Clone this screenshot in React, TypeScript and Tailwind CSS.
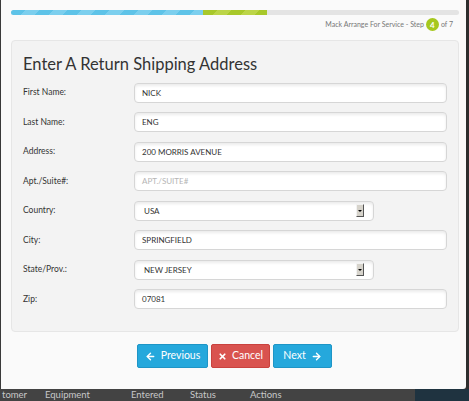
import { ArrowLeft, ArrowRight, X } from 'lucide-react';

const FONT = "font-['Lato','Open_Sans',sans-serif]";

type Field = { label: string; value: string; placeholder?: string; select?: boolean };

const FIELDS: Field[] = [
  { label: 'First Name:', value: 'NICK' },
  { label: 'Last Name:', value: 'ENG' },
  { label: 'Address:', value: '200 MORRIS AVENUE' },
  { label: 'Apt./Suite#:', value: '', placeholder: 'APT./SUITE#' },
  { label: 'Country:', value: 'USA', select: true },
  { label: 'City:', value: 'SPRINGFIELD' },
  { label: 'State/Prov.:', value: 'NEW JERSEY', select: true },
  { label: 'Zip:', value: '07081' },
];

function FormRow({ field }: { field: Field }) {
  return (
    <div className="flex items-center h-[29.5px]">
      <label className="w-[111px] text-[8.5px] text-[#333]">{field.label}</label>
      {field.select ? (
        <div className="flex items-center w-[240px] h-[20px] pl-[9px] pr-[9px] bg-white border border-[#d6d6d6] rounded-[4px] shadow-[inset_0_2px_3px_rgba(0,0,0,0.08)]">
          <span className="flex-1 text-[8px] text-[#333]">{field.value}</span>
          {/* legacy dropdown button */}
          <span className="flex items-center justify-center w-[8px] h-[13px] bg-[#d6d3cb] border-r border-b border-[#555] border-t border-l border-t-[#f2f2f2] border-l-[#f2f2f2]">
            <span className="w-0 h-0 border-l-[2px] border-r-[2px] border-t-[2.5px] border-l-transparent border-r-transparent border-t-black" />
          </span>
        </div>
      ) : (
        <div className="flex items-center w-[313px] h-[20px] px-[7px] bg-white border border-[#d6d6d6] rounded-[4px] shadow-[inset_0_2px_3px_rgba(0,0,0,0.08)]">
          <span className={`text-[8px] ${field.value ? 'text-[#333]' : 'text-[#b5b5b5]'}`}>
            {field.value || field.placeholder}
          </span>
        </div>
      )}
    </div>
  );
}

export default function App() {
  return (
    <div className={`w-[469px] h-[401px] overflow-hidden bg-[#3a3a3a] flex flex-col ${FONT}`}>
      <div className="flex h-[392px]">
        {/* Modal */}
        <div className="ml-px w-[465px] h-full bg-[#fafafa] rounded-br-[3px] px-[10px] pt-[10px] flex flex-col">
          {/* Progress */}
          <div className="flex h-[5px] w-[448px] rounded-full overflow-hidden bg-[#e4e4e4]">
            <div className="w-[192px] bg-[repeating-linear-gradient(135deg,#5ec3e8_0_10px,#7ccfee_10px_20px)]" />
            <div className="w-[64px] bg-[repeating-linear-gradient(135deg,#a8c82a_0_10px,#bcd548_10px_20px)]" />
          </div>
          <div className="flex items-center justify-end gap-[2px] h-[19px] pr-[3px] text-[7px] text-[#777]">
            <span>Mack Arrange For Service - Step</span>
            <span className="flex items-center justify-center w-[13px] h-[13px] rounded-full bg-[#a6c81e] text-white text-[8px] font-bold">
              4
            </span>
            <span>of 7</span>
          </div>

          {/* Panel */}
          <div className="mt-[6px] w-[448px] h-[292px] bg-[#f3f3f3] border border-[#e6e6e6] rounded-[4px] px-[11px] pt-[11px]">
            <h2 className="text-[16.5px] text-[#333] leading-[24px] mb-[2px]">Enter A Return Shipping Address</h2>
            <div className="flex flex-col">
              {FIELDS.map((f) => (
                <FormRow key={f.label} field={f} />
              ))}
            </div>
          </div>

          {/* Buttons */}
          <div className="flex justify-center gap-[3px] mt-[12px] pl-[2px]">
            <button className="flex items-center justify-center gap-[5px] w-[71px] h-[24px] bg-[#25a8dc] border border-[#1e95c6] rounded-[2px] text-white text-[10.5px]">
              <ArrowLeft className="w-[11px] h-[11px]" strokeWidth={3} />
              Previous
            </button>
            <button className="flex items-center justify-center gap-[5px] w-[59px] h-[24px] bg-[#d9534f] border border-[#c9423e] rounded-[2px] text-white text-[10.5px]">
              <X className="w-[9px] h-[9px]" strokeWidth={4.5} />
              Cancel
            </button>
            <button className="flex items-center justify-center gap-[5px] w-[59px] h-[24px] bg-[#25a8dc] border border-[#1e95c6] rounded-[2px] text-white text-[10.5px]">
              Next
              <ArrowRight className="w-[11px] h-[11px]" strokeWidth={3} />
            </button>
          </div>
        </div>
        <div className="flex-1 bg-[#2e2e2e]" />
      </div>

      {/* Page behind the modal */}
      <div className="flex flex-1 text-[9.5px] text-[#c8c8c8] leading-[12px]">
        <div className="flex w-[415px] bg-[#434343]">
          <span className="ml-[2px] w-[43px]">tomer</span>
          <span className="w-[86px]">Equipment</span>
          <span className="w-[59px]">Entered</span>
          <span className="w-[60px]">Status</span>
          <span>Actions</span>
        </div>
        <div className="flex-1 bg-[#1f3340]" />
      </div>
    </div>
  );
}
